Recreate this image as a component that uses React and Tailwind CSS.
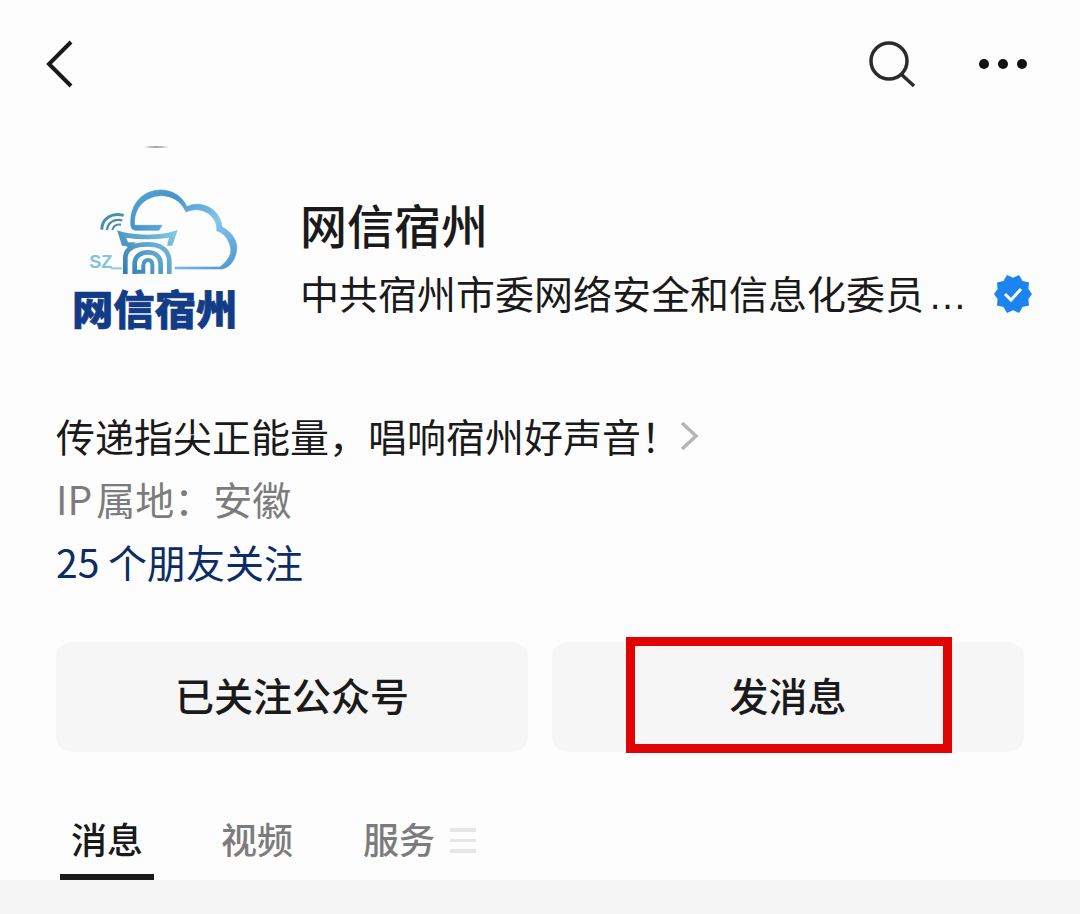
import React, { useState } from "react";

const TABS = [
    { id: "messages", label: "消息", spacing: "mr-14" },
    { id: "videos", label: "视频", spacing: "mr-12" },
    { id: "services", label: "服务", spacing: "" },
];

function AccountLogo() {
    return (
        <svg viewBox="0 0 630 630" className="w-[210px] h-[210px] shrink-0" role="img" aria-label="网信宿州">
            <defs>
                <linearGradient id="cloud" x1="0" y1="0" x2="1" y2="1">
                    <stop offset="0" stopColor="#5aa8d4" />
                    <stop offset="0.25" stopColor="#4593c8" />
                    <stop offset="0.6" stopColor="#86c6ec" />
                    <stop offset="1" stopColor="#4a94cc" />
                </linearGradient>
                <linearGradient id="gate" gradientUnits="userSpaceOnUse" x1="360" y1="300" x2="230" y2="432">
                    <stop offset="0" stopColor="#84c6e2" />
                    <stop offset="1" stopColor="#2f7fb2" />
                </linearGradient>
            </defs>

            <path d="M282 51q33-5 74 0q-37 4-74 0Z" fill="#8a8a8a" />

            {/* cloud */}
            <path
                d="M243 290C236 230 272 181 332 180C370 180 398 202 411 230C455 208 512 238 516 291C548 306 566 338 559 366C553 394 540 410 518 417H375V411H510C535 391 547 371 541 350C535 325 520 308 500 302C505 262 457 223 408 246C393 212 365 197 334 197C284 198 249 236 254 286H336L327 301H256Q246 300 243 290Z"
                fill="url(#cloud)"
                stroke="url(#cloud)"
                strokeWidth="2"
            />

            {/* wifi arcs */}
            <g fill="none" stroke="#4b8fae">
                <path d="M155 299C156 266 184 247 221 256" strokeWidth="9" />
                <path d="M171 300C173 280 190 265 217 271" strokeWidth="7" />
                <path d="M187 300C190 289 199 282 213 284" strokeWidth="6" />
            </g>

            {/* gate roof */}
            <path
                d="M201 301Q239 314 290 314Q344 314 383 300L367 347H351L357 323Q323 328 290 328Q258 328 229 323L234 337H258L240 354L224 347H216Z"
                fill="url(#gate)"
            />
            {/* gate arches */}
            <g fill="none" stroke="url(#gate)" strokeWidth="14">
                <path d="M226 432V385C226 352 258 343 293 343C334 343 358 362 358 396V432" />
                <path d="M254 432V402C254 378 273 367 294 367C318 367 332 381 332 403V432" />
                <path d="M254 425H280V407C280 395 287 390 294 390C302 390 307 396 307 406V432" strokeWidth="12" />
            </g>
            <path d="M183 412H216V418H183Z" fill="#94cce0" />
            <text
                x="118"
                y="414"
                fill="#83c3dc"
                className="font-['Liberation_Sans',sans-serif] text-[54px] font-bold"
            >
                SZ
            </text>
            <text
                x="66"
                y="585"
                fill="#123c88"
                stroke="#123c88"
                strokeWidth="2"
                className="font-['Noto_Sans_CJK_SC',sans-serif] text-[124px] font-black"
            >
                网信宿州
            </text>
        </svg>
    );
}

function VerifiedBadge() {
    return (
        <svg viewBox="0 0 38 40" className="w-[38px] h-10 shrink-0" role="img" aria-label="已认证">
            <path
                d="M19 3.8L25 1L28.5 6.9L35 8.5L34.4 15L38 20L34.4 25L35 31.5L28.5 33.1L25 39L19 36.2L13 39L9.5 33.1L3 31.5L3.6 25L0 20L3.6 15L3 8.5L9.5 6.9L13 1Z"
                fill="#1b84ee"
            />
            <path d="M11 20L17 26L27 15" fill="none" stroke="#fff" strokeWidth="3" />
        </svg>
    );
}

export default function App() {
    const [activeTab, setActiveTab] = useState("messages");

    return (
        <div className="min-h-screen flex flex-col bg-[#fdfdfd] text-[#1a1a1a] font-['Noto_Sans_CJK_SC',sans-serif]">
            <header className="flex items-center justify-between h-32 pl-11 pr-[52px]">
                <button type="button" aria-label="返回">
                    <svg viewBox="0 0 30 48" className="w-[30px] h-12" fill="none" stroke="#1a1a1a" strokeWidth="4">
                        <path d="M27 2L5 24L27 46" />
                    </svg>
                </button>
                <div className="flex items-center gap-[62px]">
                    <button type="button" aria-label="搜索">
                        <svg viewBox="0 0 48 48" className="w-12 h-12" fill="none" stroke="#2b2b2b" strokeWidth="3.5">
                            <circle cx="21" cy="21" r="18" />
                            <path d="M33 34L46 46" />
                        </svg>
                    </button>
                    <button type="button" aria-label="更多">
                        <svg viewBox="0 0 50 12" className="w-[50px] h-3" fill="#111">
                            <circle cx="6" cy="6" r="5" />
                            <circle cx="25" cy="6" r="5" />
                            <circle cx="44" cy="6" r="5" />
                        </svg>
                    </button>
                </div>
            </header>

            <main className="flex flex-col grow pt-0.5">
                <section className="flex items-center gap-10 pl-[50px] pr-12">
                    <AccountLogo />
                    <div className="grow min-w-0 pt-[50px]">
                        <h1 className="text-[47px] leading-[68px] font-medium">网信宿州</h1>
                        <div className="flex items-center justify-between">
                            <p className="text-[39px] leading-[68px] whitespace-nowrap">
                                中共宿州市委网络安全和信息化委员
                                <span className="pl-1 font-['Liberation_Sans',sans-serif]">…</span>
                            </p>
                            <VerifiedBadge />
                        </div>
                    </div>
                </section>

                <section className="px-14 pt-16 text-[39px] leading-[63px]">
                    <a href="#intro" className="flex items-center">
                        传递指尖正能量，唱响宿州好声音！
                        <svg viewBox="0 0 20 30" className="w-5 h-[30px]" fill="none" stroke="#b5b5b5" strokeWidth="3.5">
                            <path d="M2 2L16 15L2 28" />
                        </svg>
                    </a>
                    <p className="text-[#7c7c7c]">
                        <span className="mr-1">IP</span>属地：安徽
                    </p>
                    <a href="#friends" className="block text-[#0b2c66]">25 个朋友关注</a>
                </section>

                <section className="grid grid-cols-2 gap-6 px-14 pt-[49px] text-[39px] font-medium">
                    <button type="button" className="h-[110px] pb-1.5 rounded-2xl bg-[#f6f6f6]">
                        已关注公众号
                    </button>
                    <div className="relative">
                        <button type="button" className="w-full h-[110px] pb-1.5 rounded-2xl bg-[#f6f6f6]">
                            发消息
                        </button>
                        <div className="absolute -top-[5px] -bottom-px left-[74px] right-[72px] border-9 border-[#e20303] pointer-events-none" />
                    </div>
                </section>

                <nav className="flex items-start pl-[60px] pt-[50px]">
                    {TABS.map((tab) => (
                        <button
                            key={tab.id}
                            type="button"
                            onClick={() => setActiveTab(tab.id)}
                            className={`h-[78px] px-[11px] border-b-6 text-4xl font-medium ${tab.spacing} ${
                                activeTab === tab.id
                                    ? "border-[#1a1a1a] text-[#1a1a1a]"
                                    : "border-transparent text-[#7c7c7c]"
                            }`}
                        >
                            {tab.label}
                        </button>
                    ))}
                    <button type="button" aria-label="服务菜单" className="h-[78px] pl-1">
                        <svg viewBox="0 0 26 26" className="w-[26px] h-[26px]" fill="#e6e6e6">
                            <path d="M0 0H26V4H0ZM0 11H26V14H0ZM0 21H26V25H0Z" />
                        </svg>
                    </button>
                </nav>

                <div className="grow min-h-8 bg-[#f5f5f5]" />
            </main>
        </div>
    );
}
